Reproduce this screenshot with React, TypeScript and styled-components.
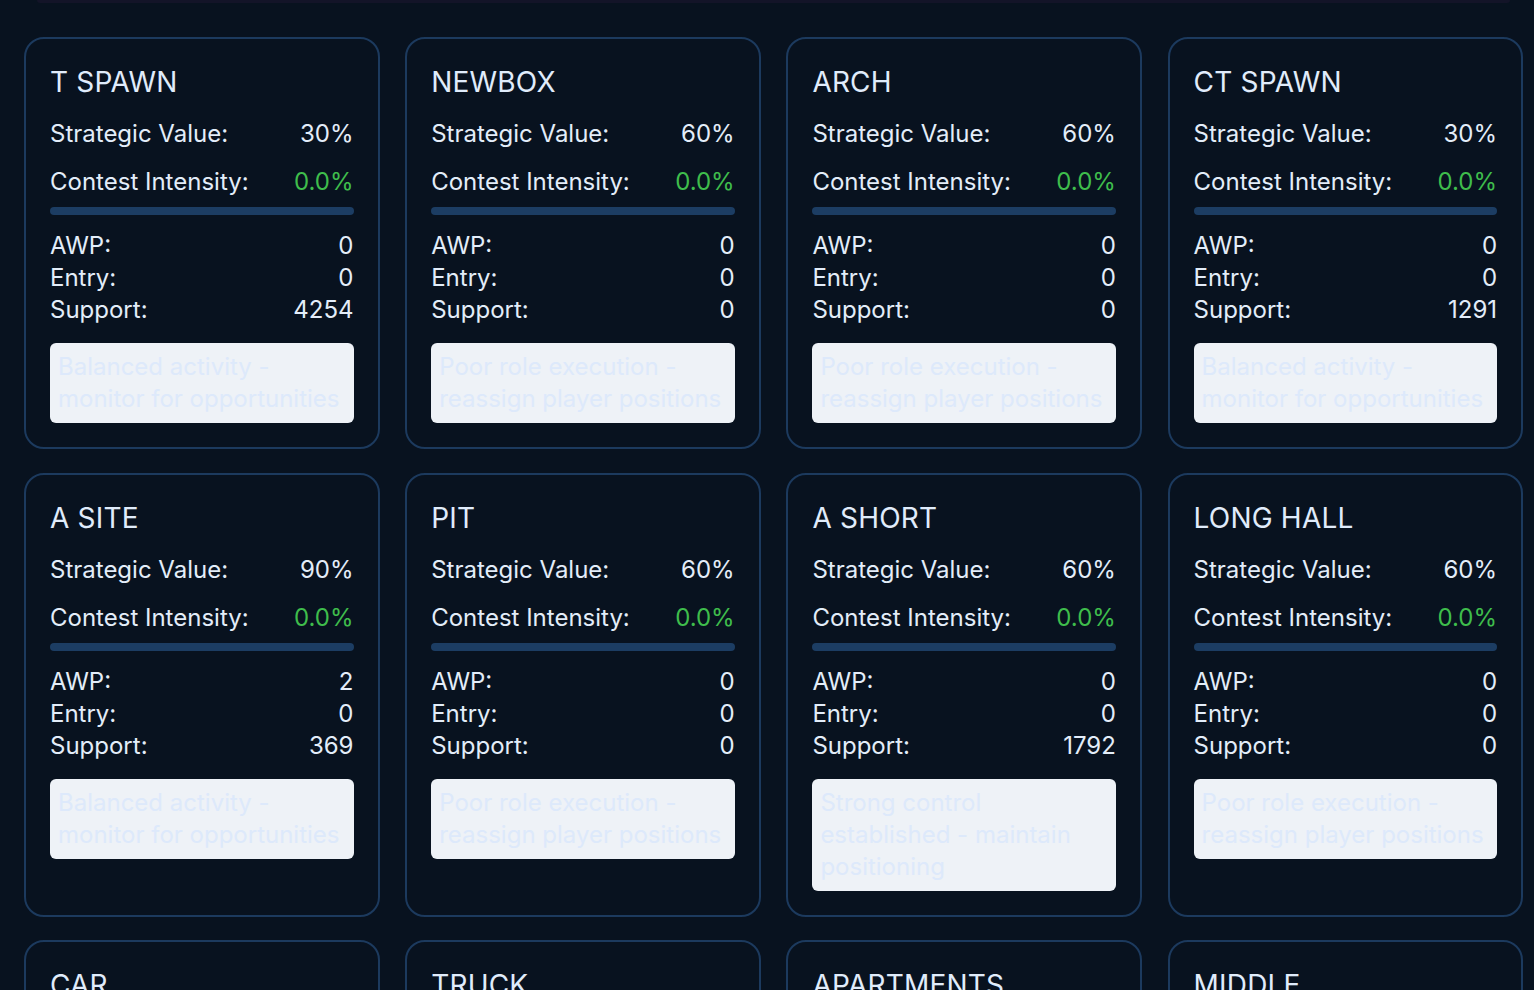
import React from "react";
import styled, { createGlobalStyle } from "styled-components";

const Global = createGlobalStyle`
  html, body { margin: 0; padding: 0; background: #08121f; }
  body { font-family: Inter, "Noto Sans", sans-serif; color: #e3edf9; }
  * { box-sizing: border-box; }
`;

const Page = styled.div`
  padding: 0 10px 40px 24px;
`;

const TopEdge = styled.div`
  height: 3px;
  margin: 0 24px 0 37px;
  background: #131428;
  border-radius: 0 0 6px 6px;
`;

const Grid = styled.div`
  margin-top: 34px;
  display: grid;
  grid-template-columns: repeat(4, 355.5px);
  column-gap: 25.7px;
  row-gap: 23.5px;
`;

const Card = styled.div`
  border: 2px solid #1c3a5e;
  border-radius: 20px;
  padding: 24px;
  background: #08121f;
  display: flex;
  flex-direction: column;
`;

const Title = styled.h3`
  margin: 0 0 17px;
  font-size: 28px;
  font-weight: 400;
  line-height: 38px;
  color: #e0ecfb;
  letter-spacing: 0.2px;
`;

const Stats = styled.div`
  display: flex;
  flex-direction: column;
  gap: 16px;
`;

const StatRow = styled.div`
  display: flex;
  justify-content: space-between;
  font-size: 24px;
  line-height: 32px;
`;

const Value = styled.span<{ $green?: boolean }>`
  color: ${(p) => (p.$green ? "#3fbd4c" : "#e3edf9")};
`;

const Bar = styled.div`
  height: 8px;
  border-radius: 4px;
  background: #1c3d63;
  margin: 9px 0 15px;
`;

const RoleRow = styled.div`
  display: flex;
  justify-content: space-between;
  font-size: 24px;
  line-height: 32px;
`;

const Advice = styled.div`
  margin-top: 17px;
  background: #eef2f7;
  border-radius: 6px;
  padding: 8px;
  font-size: 24px;
  line-height: 32px;
  color: #dde9fb;
`;

type Zone = {
  name: string;
  value: number;
  awp: number;
  entry: number;
  support: number;
  advice: string;
};

const BAL = "Balanced activity - monitor for opportunities";
const POOR = "Poor role execution - reassign player positions";
const STRONG = "Strong control established - maintain positioning";

const zones: Zone[] = [
  { name: "T SPAWN", value: 30, awp: 0, entry: 0, support: 4254, advice: BAL },
  { name: "NEWBOX", value: 60, awp: 0, entry: 0, support: 0, advice: POOR },
  { name: "ARCH", value: 60, awp: 0, entry: 0, support: 0, advice: POOR },
  { name: "CT SPAWN", value: 30, awp: 0, entry: 0, support: 1291, advice: BAL },
  { name: "A SITE", value: 90, awp: 2, entry: 0, support: 369, advice: BAL },
  { name: "PIT", value: 60, awp: 0, entry: 0, support: 0, advice: POOR },
  { name: "A SHORT", value: 60, awp: 0, entry: 0, support: 1792, advice: STRONG },
  { name: "LONG HALL", value: 60, awp: 0, entry: 0, support: 0, advice: POOR },
  { name: "CAR", value: 60, awp: 0, entry: 0, support: 0, advice: POOR },
  { name: "TRUCK", value: 60, awp: 0, entry: 0, support: 0, advice: POOR },
  { name: "APARTMENTS", value: 60, awp: 0, entry: 0, support: 0, advice: POOR },
  { name: "MIDDLE", value: 60, awp: 0, entry: 0, support: 0, advice: POOR },
];

export default function App() {
  return (
    <>
      <Global />
      <TopEdge />
      <Page>
        <Grid>
          {zones.map((z) => (
            <Card key={z.name}>
              <Title>{z.name}</Title>
              <Stats>
                <StatRow>
                  <span>Strategic Value:</span>
                  <Value>{z.value}%</Value>
                </StatRow>
                <StatRow>
                  <span>Contest Intensity:</span>
                  <Value $green>0.0%</Value>
                </StatRow>
              </Stats>
              <Bar />
              <RoleRow>
                <span>AWP:</span>
                <Value>{z.awp}</Value>
              </RoleRow>
              <RoleRow>
                <span>Entry:</span>
                <Value>{z.entry}</Value>
              </RoleRow>
              <RoleRow>
                <span>Support:</span>
                <Value>{z.support}</Value>
              </RoleRow>
              <Advice>{z.advice}</Advice>
            </Card>
          ))}
        </Grid>
      </Page>
    </>
  );
}
